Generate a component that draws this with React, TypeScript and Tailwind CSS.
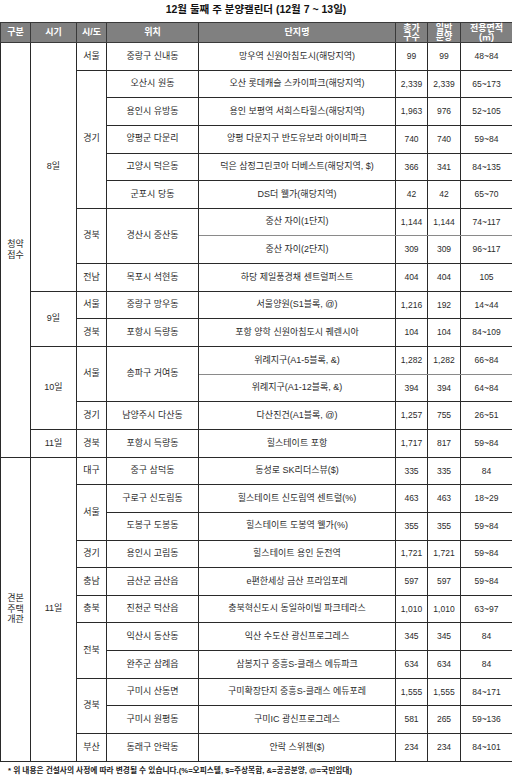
import React from 'react';

type Span = [string, number];

interface Row {
  gubun?: Span;
  date?: Span;
  sido?: Span;
  loc?: Span;
  name: string;
  total: string;
  general: string;
  area: string;
  soft?: boolean;
}

const rows: Row[] = [
  { gubun: ['청약\n접수', 15], date: ['8일', 9], sido: ['서울', 1], loc: ['중랑구 신내동', 1], name: '망우역 신원아침도시(해당지역)', total: '99', general: '99', area: '48~84' },
  { sido: ['경기', 5], loc: ['오산시 원동', 1], name: '오산 롯데캐슬 스카이파크(해당지역)', total: '2,339', general: '2,339', area: '65~173' },
  { loc: ['용인시 유방동', 1], name: '용인 보평역 서희스타힐스(해당지역)', total: '1,963', general: '976', area: '52~105' },
  { loc: ['양평군 다문리', 1], name: '양평 다문지구 반도유보라 아이비파크', total: '740', general: '740', area: '59~84' },
  { loc: ['고양시 덕은동', 1], name: '덕은 삼정그린코아 더베스트(해당지역, $)', total: '366', general: '341', area: '84~135' },
  { loc: ['군포시 당동', 1], name: 'DS더 웰가(해당지역)', total: '42', general: '42', area: '65~70' },
  { sido: ['경북', 2], loc: ['경산시 중산동', 2], name: '중산 자이(1단지)', total: '1,144', general: '1,144', area: '74~117', soft: true },
  { name: '중산 자이(2단지)', total: '309', general: '309', area: '96~117' },
  { sido: ['전남', 1], loc: ['목포시 석현동', 1], name: '하당 제일풍경채 센트럴퍼스트', total: '404', general: '404', area: '105' },
  { date: ['9일', 2], sido: ['서울', 1], loc: ['중랑구 망우동', 1], name: '서울양원(S1블록, @)', total: '1,216', general: '192', area: '14~44' },
  { sido: ['경북', 1], loc: ['포항시 득량동', 1], name: '포항 양학 신원아침도시 퀘렌시아', total: '104', general: '104', area: '84~109' },
  { date: ['10일', 3], sido: ['서울', 2], loc: ['송파구 거여동', 2], name: '위례지구(A1-5블록, &)', total: '1,282', general: '1,282', area: '66~84', soft: true },
  { name: '위례지구(A1-12블록, &)', total: '394', general: '394', area: '64~84' },
  { sido: ['경기', 1], loc: ['남양주시 다산동', 1], name: '다산진건(A1블록, @)', total: '1,257', general: '755', area: '26~51' },
  { date: ['11일', 1], sido: ['경북', 1], loc: ['포항시 득량동', 1], name: '힐스테이트 포항', total: '1,717', general: '817', area: '59~84' },
  { gubun: ['견본\n주택\n개관', 11], date: ['11일', 11], sido: ['대구', 1], loc: ['중구 삼덕동', 1], name: '동성로 SK리더스뷰($)', total: '335', general: '335', area: '84' },
  { sido: ['서울', 2], loc: ['구로구 신도림동', 1], name: '힐스테이트 신도림역 센트럴(%)', total: '463', general: '463', area: '18~29' },
  { loc: ['도봉구 도봉동', 1], name: '힐스테이트 도봉역 웰가(%)', total: '355', general: '355', area: '59~84' },
  { sido: ['경기', 1], loc: ['용인시 고림동', 1], name: '힐스테이트 용인 둔전역', total: '1,721', general: '1,721', area: '59~84' },
  { sido: ['충남', 1], loc: ['금산군 금산읍', 1], name: 'e편한세상 금산 프라임포레', total: '597', general: '597', area: '59~84' },
  { sido: ['충북', 1], loc: ['진천군 덕산읍', 1], name: '충북혁신도시 동일하이빌 파크테라스', total: '1,010', general: '1,010', area: '63~97' },
  { sido: ['전북', 2], loc: ['익산시 동산동', 1], name: '익산 수도산 광신프로그레스', total: '345', general: '345', area: '84' },
  { loc: ['완주군 삼례읍', 1], name: '삼봉지구 중흥S-클래스 에듀파크', total: '634', general: '634', area: '84' },
  { sido: ['경북', 2], loc: ['구미시 산동면', 1], name: '구미확장단지 중흥S-클래스 에듀포레', total: '1,555', general: '1,555', area: '84~171' },
  { loc: ['구미시 원평동', 1], name: '구미IC 광신프로그레스', total: '581', general: '265', area: '59~136' },
  { sido: ['부산', 1], loc: ['동래구 안락동', 1], name: '안락 스위첸($)', total: '234', general: '234', area: '84~101' },
];

const cell = 'border border-[#2a2a2a] text-center align-middle p-0 text-[#2b2b2b]';
const head = 'border border-[#3a3a3a] bg-[#808080] text-white font-bold text-center align-middle p-0 leading-[9px]';

export default function App() {
  return (
    <div className="w-[512px] h-[776px] bg-white font-['Liberation_Sans','Noto_Sans_CJK_KR',sans-serif] text-[9px]">
      <div className="h-[22px] pt-[2px] text-center text-[10.5px] leading-[14px] font-bold text-[#111]">
        12월 둘째 주 분양캘린더 (12월 7 ~ 13일)
      </div>

      <table className="w-[512px] table-fixed border-collapse">
        <colgroup>
          <col className="w-[30px]" />
          <col className="w-[46px]" />
          <col className="w-[30px]" />
          <col className="w-[92px]" />
          <col className="w-[197px]" />
          <col className="w-[32px]" />
          <col className="w-[33px]" />
          <col className="w-[52px]" />
        </colgroup>
        <thead>
          <tr className="h-[20px]">
            <th className={head}>구분</th>
            <th className={head}>시기</th>
            <th className={head}>시/도</th>
            <th className={head}>위치</th>
            <th className={head}>단지명</th>
            <th className={head}>총가<br />구수</th>
            <th className={head}>일반<br />분양</th>
            <th className={head}>전용면적<br />(㎡)</th>
          </tr>
        </thead>
        <tbody>
          {rows.map((r, i) => {
            const soft = r.soft ? ' border-b-[#8a8a8a]' : '';
            return (
              <tr key={i} className="h-[27.65px]">
                {r.gubun && (
                  <td rowSpan={r.gubun[1]} className={`${cell} whitespace-pre-line leading-[10.5px]`}>{r.gubun[0]}</td>
                )}
                {r.date && <td rowSpan={r.date[1]} className={cell}>{r.date[0]}</td>}
                {r.sido && <td rowSpan={r.sido[1]} className={cell}>{r.sido[0]}</td>}
                {r.loc && <td rowSpan={r.loc[1]} className={cell}>{r.loc[0]}</td>}
                <td className={cell + soft}>{r.name}</td>
                <td className={`${cell}${soft} text-[8.5px]`}>{r.total}</td>
                <td className={`${cell}${soft} text-[8.5px]`}>{r.general}</td>
                <td className={`${cell}${soft} text-[8.5px]`}>{r.area}</td>
              </tr>
            );
          })}
        </tbody>
      </table>

      <div className="pt-[3px] pl-[8px] text-[7.7px] leading-[12px] font-bold text-[#222]">
        * 위 내용은 건설사의 사정에 따라 변경될 수 있습니다.(%=오피스텔, $=주상복합, &amp;=공공분양, @=국민임대)
      </div>
    </div>
  );
}
